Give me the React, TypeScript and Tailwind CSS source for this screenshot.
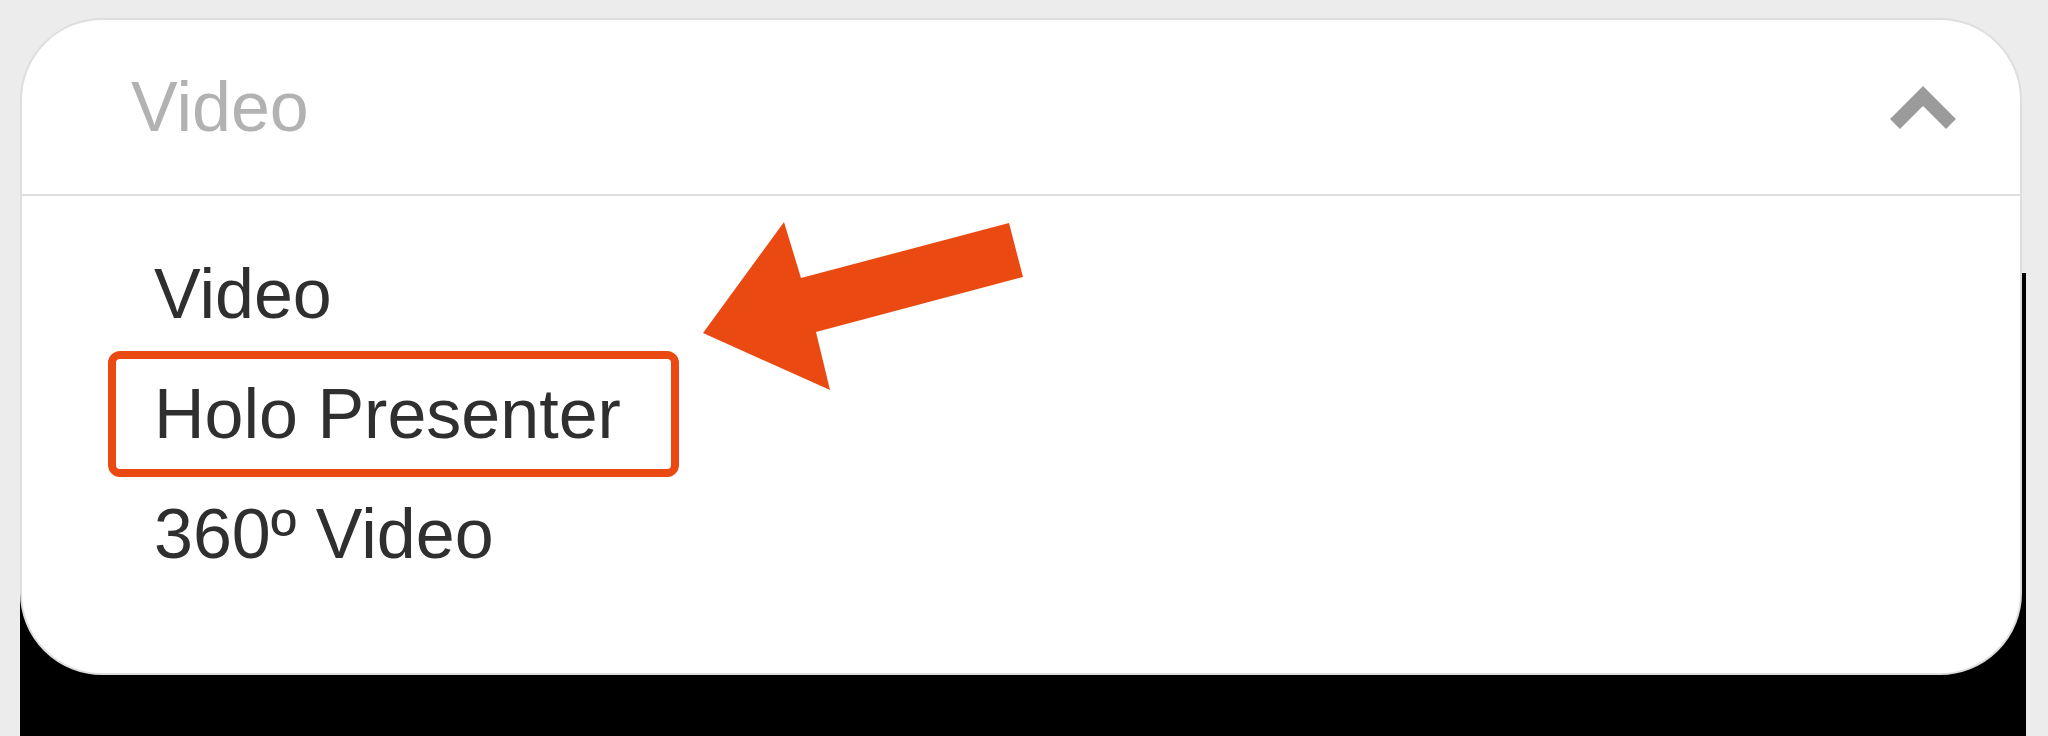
import React from "react";

const items = ["Video", "Holo Presenter", "360º Video"];

function Chevron() {
  return (
    <svg width="66" height="58" viewBox="0 0 66 58" fill="none">
      <polyline points="5,46 33,18 61,46" stroke="#9b9b9b" strokeWidth="14" strokeLinejoin="miter" />
    </svg>
  );
}

function Arrow() {
  return (
    <svg className="absolute left-[690px] top-[210px]" width="350" height="190" viewBox="0 0 350 190">
      <polygon points="13,123 94,12 111,68 319,13 333,67 126,122 140,180" fill="#ea4a12" />
    </svg>
  );
}

export default function App() {
  return (
    <div className="relative h-[736px] w-[2048px] overflow-hidden bg-[#ececec] pt-[273px] pl-[20px] pr-[22px]" style={{ fontFamily: '"Liberation Sans", Arial, sans-serif' }}>
      {/* video panel behind the dropdown */}
      <div className="h-full w-full bg-black" />

      {/* dropdown */}
      <div className="absolute left-[20px] top-[18px] h-[657px] w-[2002px] overflow-hidden rounded-[82px] border-2 border-[#dedede] bg-white">
        <div className="flex h-[176px] items-center justify-between border-b-2 border-[#dedede] pl-[109px] pr-[64px]">
          <span className="text-[70px] leading-none text-[#b2b2b2]">Video</span>
          <Chevron />
        </div>
        <ul className="pt-[38px] pl-[132px]">
          {items.map((x) => (
            <li key={x} className="h-[120px] text-[70px] leading-[120px] text-[#2f2f2f]">
              {x}
            </li>
          ))}
        </ul>
      </div>

      {/* annotation */}
      <div className="absolute left-[108px] top-[351px] h-[126px] w-[571px] rounded-[12px] border-[8px] border-[#ea4a12]" />
      <Arrow />
    </div>
  );
}
